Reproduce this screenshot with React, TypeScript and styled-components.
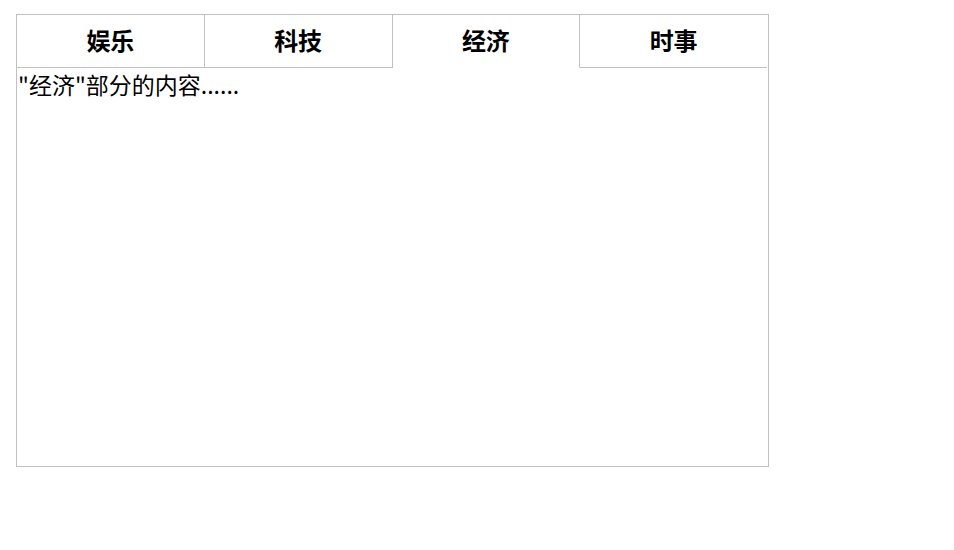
import React, { useState } from "react";
import styled, { createGlobalStyle } from "styled-components";

const GlobalStyle = createGlobalStyle`
  html, body {
    margin: 0;
    padding: 0;
    background: #ffffff;
  }
  body {
    font-family: "Noto Sans CJK SC", "Noto Sans", sans-serif;
    color: #000000;
  }
`;

const Page = styled.div`
  padding: 14px 0 0 16px;
`;

const Panel = styled.div`
  box-sizing: border-box;
  width: 753px;
  height: 453px;
  border: 1px solid #c0c0c0;
  display: flex;
  flex-direction: column;
`;

const TabBar = styled.ul`
  display: flex;
  width: 750px;
  margin: 0;
  padding: 0;
  list-style: none;
`;

const Tab = styled.li<{ active: boolean; last: boolean }>`
  box-sizing: border-box;
  flex: 1 1 0;
  height: 53px;
  padding-bottom: 4px;
  display: flex;
  align-items: center;
  justify-content: center;
  font-size: 24px;
  font-weight: bold;
  cursor: pointer;
  background: #ffffff;
  border-right: ${({ last }) => (last ? "none" : "1px solid #c0c0c0")};
  border-bottom: 1px solid
    ${({ active }) => (active ? "transparent" : "#c0c0c0")};
`;

const Content = styled.div`
  flex: 1;
  padding: 0 0 0 1px;
  font-size: 23px;
  line-height: 32px;
`;

const tabs = ["娱乐", "科技", "经济", "时事"];

export default function App() {
  const [active, setActive] = useState(2);

  return (
    <>
      <GlobalStyle />
      <Page>
        <Panel>
          <TabBar>
            {tabs.map((label, index) => (
              <Tab
                key={label}
                active={index === active}
                last={index === tabs.length - 1}
                onClick={() => setActive(index)}
              >
                {label}
              </Tab>
            ))}
          </TabBar>
          <Content>"{tabs[active]}"部分的内容......</Content>
        </Panel>
      </Page>
    </>
  );
}
